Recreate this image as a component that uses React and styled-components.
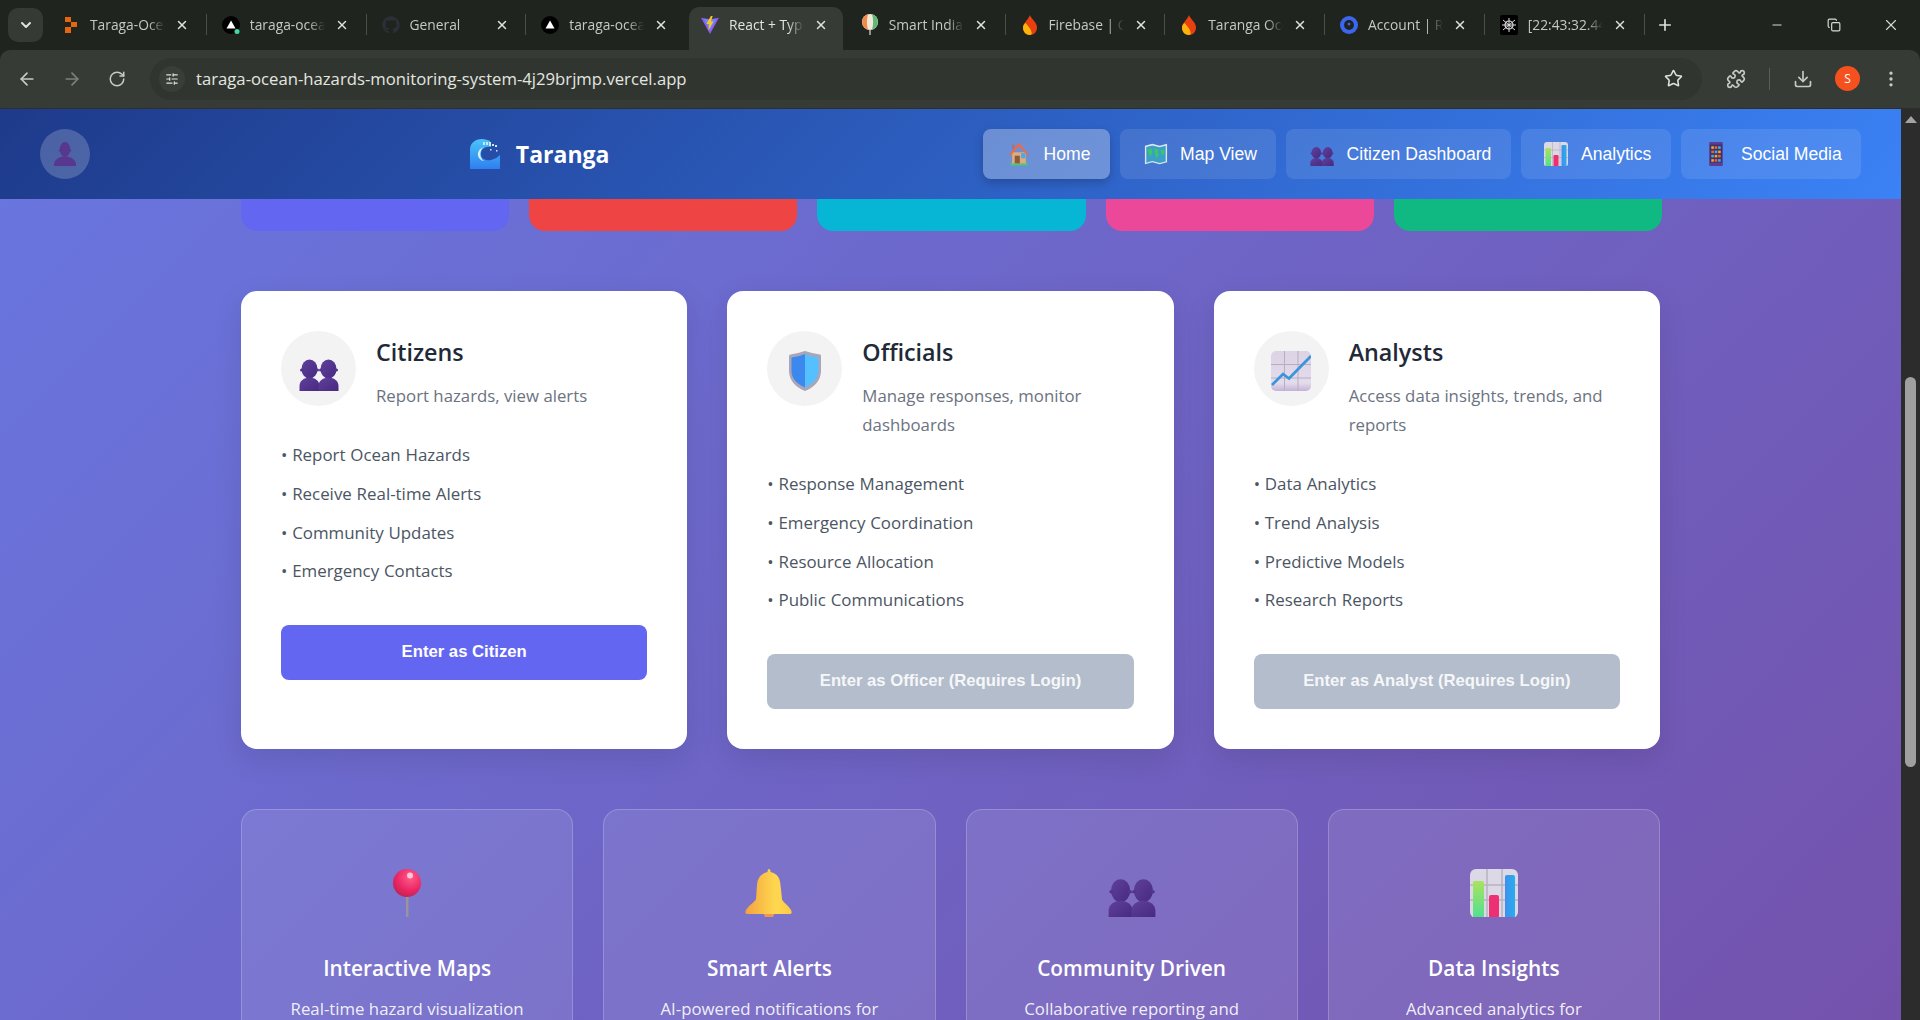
import React from 'react';
import styled, { createGlobalStyle } from 'styled-components';
import { ArrowLeft, ArrowRight, RotateCw, Star, Puzzle, Download, MoreVertical, X, Plus, ChevronDown, Minus, Copy, SlidersHorizontal } from 'lucide-react';
import { FaGithub } from 'react-icons/fa';

const Global = createGlobalStyle`
  html, body { margin: 0; padding: 0; height: 100%; overflow: hidden; background: #1f241f; }
  * { box-sizing: border-box; }
  #root { height: 100%; }
`;
const Shell = styled.div`
  height: 1020px; display: flex; flex-direction: column; overflow: hidden;
  font-family: "Open Sans", "Noto Sans", sans-serif;
`;
const TabStrip = styled.div`
  height: 50px; flex: none; display: flex; align-items: flex-end; background: #1f241f; padding-left: 8px;
`;
const TabSearch = styled.div`
  width: 35px; height: 34px; margin: 0 4px 8px 0; border-radius: 10px; background: #353a34; color: #dfe1db;
  display: flex; align-items: center; justify-content: center; flex: none;
`;
const Tab = styled.div`
  position: relative; width: 159.75px; height: 43px; flex: none; display: flex; align-items: center;
  padding: 0 0 7px 15px; color: #c6c9c3;
  ${p => p.$active && `
    color: #e2e4de;
    &::before { content: ""; position: absolute; left: 3px; right: 3px; top: 0; bottom: 0; background: #373b35; border-radius: 10px 10px 0 0; }
  `}
  ${p => p.$sep && `
    &::after { content: ""; position: absolute; right: 0; top: 7px; height: 21px; width: 1px; background: #4b4f49; }
  `}
`;
const Favicon = styled.span`
  position: relative; width: 18px; height: 18px; flex: none; margin-right: 10px; display: flex; align-items: center; justify-content: center;
`;
const TabTitle = styled.span`
  position: relative; width: 75px; flex: none; overflow: hidden; white-space: nowrap; font-size: 13.8px; line-height: 18px;
  -webkit-mask-image: linear-gradient(90deg, #000 78%, transparent 100%);
  mask-image: linear-gradient(90deg, #000 78%, transparent 100%);
`;
const TabClose = styled.span`
  position: relative; margin-left: 9px; width: 16px; height: 16px; display: flex; align-items: center; justify-content: center; color: #e0e2dc;
`;
const NewTab = styled.div`
  width: 20px; height: 20px; margin: 0 0 15px 10px; color: #dfe1db; display: flex; align-items: center; justify-content: center;
`;
const WindowControls = styled.div`
  margin-left: auto; display: flex; align-self: flex-start; height: 50px; align-items: center; color: #d8dad4;
`;
const WinBtn = styled.div`
  width: 57px; height: 50px; padding-right: 2px; display: flex; align-items: center; justify-content: center;
`;
const Toolbar = styled.div`
  height: 59px; flex: none; display: flex; align-items: center; background: #373b35; border-radius: 10px 10px 0 0; padding: 0 16px 1px 17px; color: #c8cbc4;
  border-bottom: 1px solid #2c2f2b;
`;
const ToolBtn = styled.div`
  width: 20px; height: 20px; margin-right: 25px; display: flex; align-items: center; justify-content: center;
  color: ${p => p.$dim ? '#7d817a' : '#c8cbc4'};
`;
const Omnibox = styled.div`
  width: 1552px; margin-left: -2px; height: 42px; flex: none; background: #31352f; border-radius: 21px; display: flex; align-items: center; padding: 0 19px 0 9px;
`;
const SiteInfo = styled.div`
  width: 26px; height: 26px; border-radius: 50%; background: #3a3e38; display: flex; align-items: center; justify-content: center; color: #dfe1db; margin-right: 11px;
`;
const Url = styled.div`
  flex: 1; color: #e4e6e0; font-size: 16.7px; white-space: nowrap;
`;
const ToolGroup = styled.div`
  flex: 1; display: flex; align-items: center; padding-left: 24px; gap: 0;
`;
const ToolSep = styled.div`
  width: 1px; height: 22px; background: #5a5e58; margin: 0 23px 0 23px;
`;
const Profile = styled.div`
  width: 25px; height: 25px; border-radius: 50%; background: #f4511e; color: #fff; font-size: 12px; display: flex; align-items: center; justify-content: center; margin: 0 21px 0 22px;
`;
const Viewport = styled.div`
  flex: 1; display: flex; min-height: 0;
`;
const Page = styled.div`
  flex: 1; min-width: 0; overflow: hidden;
  background: linear-gradient(135deg, #667eea 0%, #764ba2 100%);
  background-size: 100% 2055px; background-position: 0 -580px;
`;
const Scrollbar = styled.div`
  width: 19px; flex: none; background: #2c2c2c; display: flex; flex-direction: column; align-items: center;
`;
const ScrollArrow = styled.div`
  margin-top: 7px; width: 0; height: 0; border-left: 6px solid transparent; border-right: 6px solid transparent; border-bottom: 7px solid #a3a3a3;
`;
const ScrollThumb = styled.div`
  margin-top: 254px; width: 11px; height: 390px; border-radius: 6px; background: #9f9f9f;
`;
const Header = styled.header`
  height: 90px; display: flex; align-items: center; justify-content: space-between; padding: 0 40px;
  background: linear-gradient(135deg, #1e3a8a 0%, #3b82f6 100%);
`;
const Avatar = styled.div`
  width: 50px; height: 50px; border-radius: 50%; background: rgba(255,255,255,.2); display: flex; align-items: center; justify-content: center;
`;
const Logo = styled.div`
  display: flex; align-items: center; gap: 16px; color: #fff; font-size: 23px; font-weight: 700; line-height: 1; margin-left: 6px;
`;
const Nav = styled.nav`
  display: flex; gap: 10px;
`;
const NavItem = styled.div`
  height: 50px; padding: 0 19.3px; display: flex; align-items: center; gap: 8px; border-radius: 8px; color: #fff;
  font-family: "Liberation Sans", Arial, sans-serif; font-size: 17.6px; white-space: nowrap;
  background: ${p => p.$active ? 'rgba(255,255,255,.3)' : 'rgba(255,255,255,.1)'};
  box-shadow: ${p => p.$active ? '0 4px 10px rgba(0,0,0,.2)' : 'none'};
`;
const NavIcon = styled.span`
  width: 33px; display: flex; justify-content: center;
`;
const Content = styled.main`
  width: 1419px; margin: 0 auto 0 241px;
`;
const StatRow = styled.div`
  display: grid; grid-template-columns: repeat(5, 1fr); gap: 20px; height: 32px; width: 1421px;
`;
const Stat = styled.div`
  background: ${p => p.$color}; border-radius: 0 0 16px 16px;
`;
const RoleGrid = styled.div`
  display: grid; grid-template-columns: repeat(3, 1fr); gap: 40px; margin-top: 60px;
`;
const RoleCard = styled.section`
  background: #fff; border-radius: 16px; padding: 40px; height: 458px; box-shadow: 0 10px 30px rgba(0,0,0,.1); line-height: 28.8px;
`;
const RoleHead = styled.div`
  display: flex; gap: 20px; margin-bottom: 26px;
`;
const RoleIcon = styled.div`
  width: 75px; height: 75px; flex: none; border-radius: 50%; background: #f3f3f3; display: flex; align-items: center; justify-content: center; padding-top: 5px;
`;
const RoleTitle = styled.h3`
  margin: 0 0 7px; font-size: 23.3px; line-height: 43px; font-weight: 600; color: #1f2937;
`;
const RoleDesc = styled.p`
  margin: 0; font-size: 16.8px; line-height: 29px; color: #6b7280;
`;
const Bullets = styled.ul`
  list-style: none; margin: 0 0 34px; padding: 0;
`;
const Bullet = styled.li`
  padding: 5px 0; font-size: 16.9px; color: #4b5563; height: 38.8px; word-spacing: 0.4px;
`;
const EnterButton = styled.div`
  height: 55px; border-radius: 8px; display: flex; align-items: center; justify-content: center;
  font-family: "Liberation Sans", Arial, sans-serif; font-weight: 700; font-size: 16.7px; color: ${p => p.$muted ? 'rgba(255,255,255,.9)' : '#fff'};
  background: ${p => p.$muted ? '#b4bdcc' : '#6366f1'};
`;
const FeatureGrid = styled.div`
  display: grid; grid-template-columns: repeat(4, 1fr); gap: 30px; margin-top: 60px;
`;
const Feature = styled.article`
  height: 300px; padding: 40px; text-align: center; color: #fff; border-radius: 16px;
  background: rgba(255,255,255,.1); border: 1px solid rgba(255,255,255,.2);
`;
const FeatureIcon = styled.div`
  height: 86px; display: flex; align-items: center; justify-content: center; margin-bottom: 14px;
`;
const FeatureTitle = styled.h4`
  margin: 0 0 7px; font-size: 20.8px; line-height: 37px; font-weight: 600; white-space: nowrap;
`;
const FeatureText = styled.p`
  margin: 0; font-size: 16.8px; line-height: 29px; color: rgba(255,255,255,.9);
`;

const Busts = ({ size = 40 }) => (
  <svg width={size} height={size} viewBox="0 0 40 40">
    <defs><linearGradient id="bu" x1="0" y1="0" x2="1" y2="1"><stop offset="0" stopColor="#5f3f9c"/><stop offset="1" stopColor="#472a80"/></linearGradient></defs>
    {[0, 19].map(x => (
      <g key={x} transform={`translate(${x} 0)`} fill="url(#bu)">
        <ellipse cx="10.500" cy="18" rx="8" ry="9.500"/>
        <circle cx="2.500" cy="19" r="1.500"/><circle cx="18.500" cy="19" r="1.500"/>
        <path d="M.5 40v-5c0-5 4.500-8.500 10-8.500s10 3.500 10 8.500v5z"/>
      </g>
    ))}
  </svg>
);
const OneBust = ({ size = 24 }) => (
  <svg width={size} height={size} viewBox="0 0 24 24">
    <g fill="#57378f"><ellipse cx="12" cy="7.500" rx="5.200" ry="7.500"/><circle cx="6.600" cy="8.500" r="1"/><circle cx="17.400" cy="8.500" r="1"/><path d="M1 24v-1.500c0-4.500 5-8 11-8s11 3.500 11 8V24z"/></g>
  </svg>
);
const Shield = () => (
  <svg width="40" height="40" viewBox="0 0 40 40">
    <path d="M20 0l7 2 8 1.500c1 0 1 1 1 2V20c0 10-8 17-16 20C12 37 4 30 4 20V5.500c0-1 .5-2 1.500-2L13 2z" fill="#aaa5b8"/>
    <path d="M20 3v33.500C13 33.500 6.500 28 6.500 20V6.500l8-1.500z" fill="#3b88ee"/>
    <path d="M20 3v33.500C27 33.500 33.500 28 33.500 20V6.500l-8-1.500z" fill="#55c0ff"/>
  </svg>
);
const ChartUp = () => (
  <svg width="40" height="40" viewBox="0 0 40 40">
    <defs><linearGradient id="cu" x1="0" y1="0" x2="0" y2="1"><stop offset="0" stopColor="#dcd3e5"/><stop offset=".8" stopColor="#e3dcec"/><stop offset="1" stopColor="#c5b3d6"/></linearGradient></defs>
    <rect width="40" height="40" rx="5" fill="url(#cu)"/>
    <path d="M13.500 0v40M27 0v40M0 13.500h40M0 27h40" stroke="#b9adc2" strokeWidth="1"/>
    <path d="M1 34l11-11 6 4.500L40 5" fill="none" stroke="#3a95dc" strokeWidth="2.800"/>
  </svg>
);
const ChartBar = ({ size = 48 }) => (
  <svg width={size} height={size} viewBox="0 0 48 48">
    <rect width="48" height="49" rx="6" fill="#ddd8e5"/>
    <path d="M17 0v48M32 0v48M0 16h48M0 31h48" stroke="#b8b2c0" strokeWidth="1.500"/>
    <defs>
      <linearGradient id="g1" x1="0" y1="0" x2="0" y2="1"><stop offset="0" stopColor="#a9e35e"/><stop offset="1" stopColor="#4fe090"/></linearGradient>
      <linearGradient id="g3" x1="0" y1="0" x2="1" y2="0"><stop offset="0" stopColor="#3f8fef"/><stop offset="1" stopColor="#26aeee"/></linearGradient>
    </defs>
    <rect x="3" y="12" width="11" height="37" rx="2" fill="url(#g1)"/>
    <rect x="19" y="26" width="10" height="23" rx="2" fill="#ee3073"/>
    <rect x="35" y="6" width="10" height="43" rx="2" fill="url(#g3)"/>
  </svg>
);
const Pin = () => (
  <svg width="48" height="48" viewBox="0 0 48 48">
    <defs><radialGradient id="pp" cx=".62" cy=".3" r=".8"><stop offset="0" stopColor="#ff5c8a"/><stop offset=".6" stopColor="#ea2665"/><stop offset="1" stopColor="#b5234e"/></radialGradient></defs>
    <rect x="23" y="26" width="2.500" height="22" fill="#99949f"/>
    <ellipse cx="24" cy="14" rx="14" ry="14" fill="url(#pp)"/>
    <ellipse cx="27" cy="6.500" rx="3" ry="3" fill="#fbc6d6"/>
  </svg>
);
const Bell = () => (
  <svg width="48" height="48" viewBox="0 0 48 48">
    <defs><linearGradient id="be" x1="0" y1="0" x2="1" y2="0"><stop offset="0" stopColor="#f2a23f"/><stop offset=".65" stopColor="#ffd84f"/><stop offset="1" stopColor="#fbcb46"/></linearGradient></defs>
    <path d="M24 0c1 0 1.500 1 1.500 3 7 1.500 9.500 6 10 13l1.500 14c.5 3 6 6 9 11 1 2 1 4-1 4H2c-2 0-2-2-1-4 3-5 9-8 10-11l1-14c.5-7 4-11.500 10.500-13C22.500 1 23 0 24 0z" fill="url(#be)"/>
    <path d="M19 45h10c0 3-2 4-5 4s-5-1-5-4z" fill="#f09650"/>
  </svg>
);
const House = () => (
  <svg width="24" height="24" viewBox="0 0 26 28">
    <rect x="3" y="24" width="20" height="3.500" fill="#4cc77a"/>
    <path d="M5 12h16v13H5z" fill="#e0ac7c"/>
    <path d="M13 1L1.500 15l1.500 1L13 5l10 11 1.500-1z" fill="#ef6a42"/>
    <path d="M13 1l-5 6v-4h-3v7z" fill="#e5512f" opacity=".5"/>
    <rect x="8" y="16" width="6" height="9" fill="#8c5a3c"/>
    <rect x="15.500" y="13" width="5" height="6" fill="#47a9e8"/>
  </svg>
);
const MapIcon = () => (
  <svg width="24" height="24" viewBox="0 0 26 26">
    <path d="M1 4l8-2 8 2 8-2v20l-8 2-8-2-8 2z" fill="#dfe6ef"/>
    <path d="M2.500 5.500l6.500-1.700 8 2 6.500-1.700V21l-6.500 1.700-8-2-6.500 1.700z" fill="#3aa0c8"/>
    <path d="M4 8l4-1 1 4-2 5-2-3zM11 7l5 1-1 3 1 3-2 4-2-4zM18 9l4-1 0 5-3 1z" fill="#3ec46b"/>
  </svg>
);
const Phone = () => (
  <svg width="14" height="24" viewBox="0 0 16 28">
    <rect width="16" height="28" rx="1.500" fill="#5b3d96"/>
    <rect x="1" y="3" width="14" height="21" fill="#3f3260"/>
    {[5, 10, 15, 20].map((y, i) => [2.500, 6.500, 10.500].map((x, j) => (
      <rect key={`${i}${j}`} x={x} y={y} width="3" height="3" fill={['#f4a53a', '#e8653c', '#4aa8e8'][(i + j) % 3]}/>
    )))}
  </svg>
);
const Wave = () => (
  <svg width="30" height="30" viewBox="0 0 30 30">
    <defs><linearGradient id="wa" x1="0" y1="0" x2="0" y2="1"><stop offset="0" stopColor="#4cc4f8"/><stop offset="1" stopColor="#2f7ff0"/></linearGradient></defs>
    <path d="M0 30V11C0 4 5 0 12 0c3 0 6 1 8 2l1 6c-6-1-10 2-10 7 0 5 5 7 10 6 4-1 7-3 9-5v14z" fill="url(#wa)"/>
    <path d="M14 8c-5 3-5 11 0 14-7-1-9-11 0-14z" fill="#d8f2ff"/>
    <path d="M13 3h2v3h-2zM16 3h2v3h-2zM19 3h2v4h-2zM22 5h2v2h-2zM25 6h2v2h-2zM20 10h1.500v1.500H20zM26 11h1.500v1.500H26z" fill="#c5e9fb"/>
  </svg>
);
const Vector = ({ dot }) => (
  <svg width="18" height="18" viewBox="0 0 18 18">
    <circle cx="9" cy="9" r="9" fill="#000"/>
    <path d="M9 4.500l4.500 8h-9z" fill="#fff"/>
    {dot && <circle cx="15" cy="15.500" r="2.500" fill="#3fd9a8"/>}
  </svg>
);
const Flame = () => (
  <svg width="16" height="20" viewBox="0 0 16 20">
    <path d="M8 0c1 4 7 7 7 12.500C15 17 12 20 8 20s-7-3-7-7.500C1 8 6 5 8 0z" fill="#e8400f"/>
    <path d="M1 12.500C1 17 4 20 8 20c1.500 0 2-1 1.500-3C9 14 6 11 3.500 8 2 9.500 1 10.500 1 12.500z" fill="#fbb40c"/>
  </svg>
);
const favicons = [
  <svg width="12" height="18" viewBox="0 0 12 18"><path d="M0 1h6v5H0zM6 6h6v5H6zM0 11h6v6H0z" fill="#e8650f"/></svg>,
  <Vector dot />,
  <FaGithub size={18} color="#2b3036" />,
  <Vector />,
  <svg width="20" height="20" viewBox="0 0 20 20"><path d="M0 2l10 1.500L20 2 10 20z" fill="#8a5cf6"/><path d="M3 3l7 1.200L17 3l-7 13z" fill="#6d8cf0"/><path d="M11 0l-5 9h3l-1 7 6-10h-3l2-6z" fill="#fbc522"/></svg>,
  <svg width="18" height="22" viewBox="0 0 18 22"><circle cx="9" cy="8" r="8" fill="#f3e8d8"/><path d="M7 .3A8 8 0 007 15.700C5.500 11 5.500 5 7 .3z" fill="#ef8a4a"/><path d="M11 .3A8 8 0 0111 15.700c1.500-4.700 1.500-10.700 0-15.400z" fill="#5fb878"/><path d="M9 16v5" stroke="#bbb" strokeWidth="1.500"/></svg>,
  <Flame />,
  <Flame />,
  <svg width="20" height="20" viewBox="0 0 20 20"><circle cx="10" cy="10" r="10" fill="#3d66f0"/><circle cx="10" cy="10" r="5.500" fill="#1f241f"/><circle cx="10" cy="9" r="1.600" fill="#3d66f0"/></svg>,
  <svg width="18" height="20" viewBox="0 0 18 20"><rect width="18" height="20" rx="2" fill="#000"/><circle cx="9" cy="10" r="4" fill="none" stroke="#ddd" strokeWidth="1.200"/><path d="M9 3v14M3 5l12 10M15 5L3 15M2 10h14" stroke="#ddd" strokeWidth="1"/></svg>,
];
const titles = ['Taraga-Ocean-Hazards', 'taraga-ocean-hazards', 'General', 'taraga-ocean-hazards', 'React + TypeScript', 'Smart India Hackathon', 'Firebase | Console', 'Taranga Ocean', 'Account | Render', '[22:43:32.441]'];

const navItems = [
  ['Home', <House />, true], ['Map View', <MapIcon />], ['Citizen Dashboard', <Busts size={24} />], ['Analytics', <ChartBar size={24} />], ['Social Media', <Phone />],
];
const stats = ['#6366f1', '#ef4444', '#06b6d4', '#ec4899', '#10b981'];
const roles = [
  { icon: <Busts />, title: 'Citizens', desc: 'Report hazards, view alerts', items: ['Report Ocean Hazards', 'Receive Real-time Alerts', 'Community Updates', 'Emergency Contacts'], cta: 'Enter as Citizen' },
  { icon: <Shield />, title: 'Officials', desc: 'Manage responses, monitor dashboards', items: ['Response Management', 'Emergency Coordination', 'Resource Allocation', 'Public Communications'], cta: 'Enter as Officer (Requires Login)', muted: true },
  { icon: <ChartUp />, title: 'Analysts', desc: 'Access data insights, trends, and reports', items: ['Data Analytics', 'Trend Analysis', 'Predictive Models', 'Research Reports'], cta: 'Enter as Analyst (Requires Login)', muted: true },
];
const features = [
  { icon: <Pin />, title: 'Interactive Maps', text: 'Real-time hazard visualization with live updates' },
  { icon: <Bell />, title: 'Smart Alerts', text: 'AI-powered notifications for coastal communities' },
  { icon: <Busts size={48} />, title: 'Community Driven', text: 'Collaborative reporting and local verification' },
  { icon: <ChartBar />, title: 'Data Insights', text: 'Advanced analytics for comprehensive planning' },
];

export default function App() {
  return (
    <Shell>
      <Global />
      <TabStrip>
        <TabSearch><ChevronDown size={16} strokeWidth={3} /></TabSearch>
        {titles.map((t, i) => (
          <Tab key={i} $active={i === 4} $sep={i !== 3 && i !== 4}>
            <Favicon>{favicons[i]}</Favicon>
            <TabTitle>{t}</TabTitle>
            <TabClose><X size={14} strokeWidth={2.5} /></TabClose>
          </Tab>
        ))}
        <NewTab><Plus size={18} strokeWidth={2.2} /></NewTab>
        <WindowControls>
          <WinBtn><Minus size={14} /></WinBtn>
          <WinBtn><Copy size={14} /></WinBtn>
          <WinBtn><X size={18} strokeWidth={1.5} /></WinBtn>
        </WindowControls>
      </TabStrip>
      <Toolbar>
        <ToolBtn><ArrowLeft size={20} /></ToolBtn>
        <ToolBtn $dim><ArrowRight size={20} /></ToolBtn>
        <ToolBtn><RotateCw size={18} /></ToolBtn>
        <Omnibox>
          <SiteInfo><SlidersHorizontal size={14} /></SiteInfo>
          <Url>taraga-ocean-hazards-monitoring-system-4j29brjmp.vercel.app</Url>
          <Star size={19} color="#dfe1db" />
        </Omnibox>
        <ToolGroup>
          <Puzzle size={20} />
          <ToolSep />
          <Download size={20} />
          <Profile>S</Profile>
          <MoreVertical size={20} />
        </ToolGroup>
      </Toolbar>
      <Viewport>
        <Page>
          <Header>
            <Avatar><OneBust /></Avatar>
            <Logo><Wave />Taranga</Logo>
            <Nav>
              {navItems.map(([label, icon, active]) => (
                <NavItem key={label} $active={active}><NavIcon>{icon}</NavIcon>{label}</NavItem>
              ))}
            </Nav>
          </Header>
          <Content>
            <StatRow>{stats.map(c => <Stat key={c} $color={c} />)}</StatRow>
            <RoleGrid>
              {roles.map(r => (
                <RoleCard key={r.title}>
                  <RoleHead>
                    <RoleIcon>{r.icon}</RoleIcon>
                    <div>
                      <RoleTitle>{r.title}</RoleTitle>
                      <RoleDesc>{r.desc}</RoleDesc>
                    </div>
                  </RoleHead>
                  <Bullets>{r.items.map(it => <Bullet key={it}>• {it}</Bullet>)}</Bullets>
                  <EnterButton $muted={r.muted}>{r.cta}</EnterButton>
                </RoleCard>
              ))}
            </RoleGrid>
            <FeatureGrid>
              {features.map(f => (
                <Feature key={f.title}>
                  <FeatureIcon>{f.icon}</FeatureIcon>
                  <FeatureTitle>{f.title}</FeatureTitle>
                  <FeatureText>{f.text}</FeatureText>
                </Feature>
              ))}
            </FeatureGrid>
          </Content>
        </Page>
        <Scrollbar><ScrollArrow /><ScrollThumb /></Scrollbar>
      </Viewport>
    </Shell>
  );
}
